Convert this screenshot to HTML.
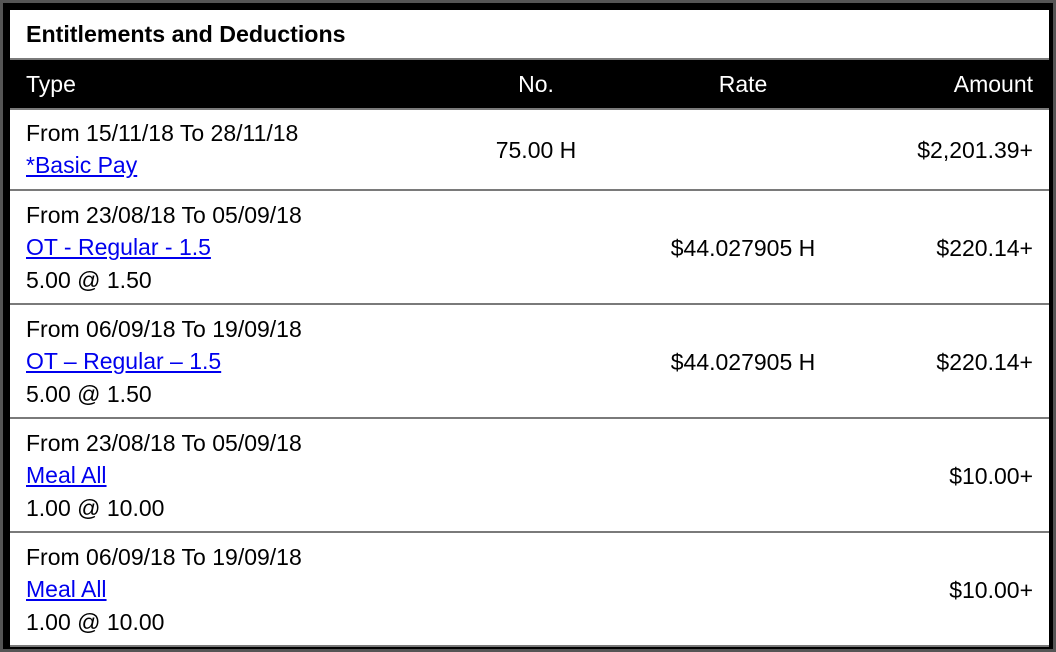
<!DOCTYPE html>
<html><head><style>
body{margin:0;width:1056px;height:652px;background:#000;font-family:"Liberation Sans",Arial,sans-serif;overflow:hidden;position:relative}
.frame{position:absolute;left:0;top:0;width:1050px;height:646px;border:3px solid #555;background:#000}
.a{position:absolute;white-space:nowrap;font-size:23px;color:#000;line-height:32.3px}
.bg{position:absolute;left:10px;width:1039px}
a{color:#0000ee;text-decoration:underline}
.c{transform:translateX(-50%)}
.r{transform:translateX(-100%)}
</style></head><body>
<div class="frame"></div>
<div class="bg" style="top:10px;height:48px;background:#fff"></div>
<div class="bg" style="top:58px;height:2px;background:#7a7a7a"></div>
<div class="bg" style="top:60px;height:48px;background:#000"></div>
<div class="bg" style="top:108px;height:2px;background:#7a7a7a"></div>
<div class="bg" style="top:110px;height:79px;background:#fff"></div>
<div class="bg" style="top:189px;height:2px;background:#7a7a7a"></div>
<div class="bg" style="top:191px;height:112px;background:#fff"></div>
<div class="bg" style="top:303px;height:2px;background:#7a7a7a"></div>
<div class="bg" style="top:305px;height:112px;background:#fff"></div>
<div class="bg" style="top:417px;height:2px;background:#7a7a7a"></div>
<div class="bg" style="top:419px;height:112px;background:#fff"></div>
<div class="bg" style="top:531px;height:2px;background:#7a7a7a"></div>
<div class="bg" style="top:533px;height:113px;background:#fff"></div>
<div class="bg" style="top:645px;height:2px;background:#7a7a7a"></div>

<div class="a" style="left:26px;top:18px;font-weight:bold;font-size:23.2px">Entitlements and Deductions</div>
<div class="a" style="left:26px;top:68px;color:#fff">Type</div>
<div class="a c" style="left:536px;top:68px;color:#fff">No.</div>
<div class="a c" style="left:743px;top:68px;color:#fff">Rate</div>
<div class="a r" style="left:1033px;top:68px;color:#fff">Amount</div>

<div class="a" style="left:26px;top:117px">From 15/11/18 To 28/11/18<br><a>*Basic Pay</a></div>
<div class="a c" style="left:536px;top:134px">75.00 H</div>
<div class="a r" style="left:1033px;top:134px">$2,201.39+</div>

<div class="a" style="left:26px;top:199px">From 23/08/18 To 05/09/18<br><a>OT - Regular - 1.5</a><br>5.00 @ 1.50</div>
<div class="a c" style="left:743px;top:232px">$44.027905 H</div>
<div class="a r" style="left:1033px;top:232px">$220.14+</div>

<div class="a" style="left:26px;top:313px">From 06/09/18 To 19/09/18<br><a>OT – Regular – 1.5</a><br>5.00 @ 1.50</div>
<div class="a c" style="left:743px;top:346px">$44.027905 H</div>
<div class="a r" style="left:1033px;top:346px">$220.14+</div>

<div class="a" style="left:26px;top:427px">From 23/08/18 To 05/09/18<br><a>Meal All</a><br>1.00 @ 10.00</div>
<div class="a r" style="left:1033px;top:460px">$10.00+</div>

<div class="a" style="left:26px;top:541px">From 06/09/18 To 19/09/18<br><a>Meal All</a><br>1.00 @ 10.00</div>
<div class="a r" style="left:1033px;top:574px">$10.00+</div>
</body></html>
